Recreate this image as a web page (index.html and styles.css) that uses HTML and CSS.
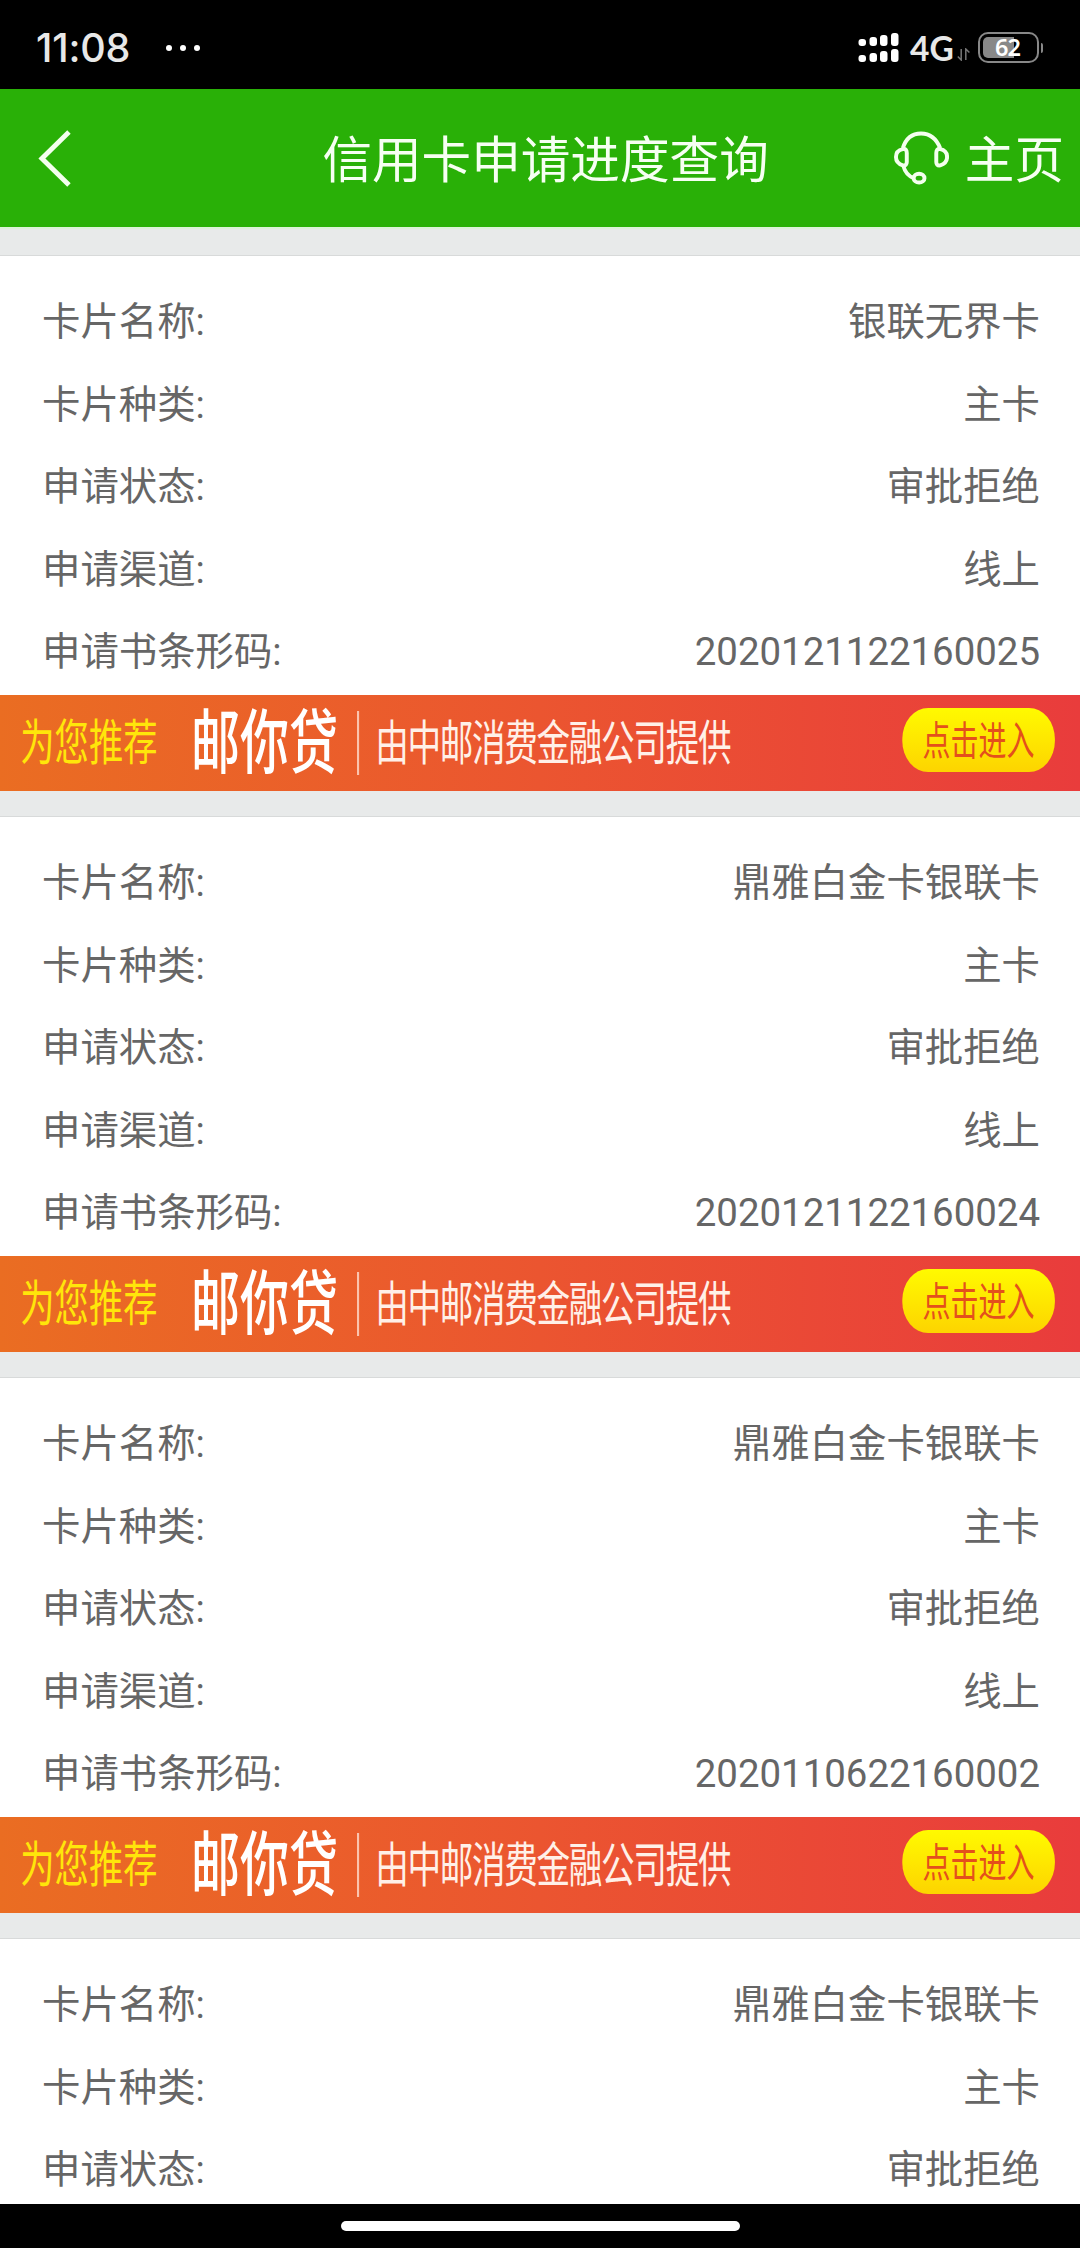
FILE: index.html
```
<!DOCTYPE html>
<html lang="zh-CN">
<head>
  <meta charset="UTF-8" />
  <meta name="viewport" content="width=device-width, initial-scale=1.0"/>
  <title>信用卡申请进度查询</title>
  <link rel="stylesheet" href="styles.css">
</head>
<body>
  <div class="app">
    <div class="status-bar">
      <span class="clock">11:08</span>
      <div class="dots"><i></i><i></i><i></i></div>
      <div class="status-right">
        <svg class="signal" width="41" height="30" viewBox="0 0 41 30" fill="#fff">
          <rect x="0.5" y="6" width="7.5" height="7" rx="3"/>
          <rect x="11.5" y="4" width="7.5" height="9" rx="3"/>
          <rect x="22" y="2" width="7.5" height="11" rx="3"/>
          <rect x="33" y="0" width="7.5" height="13" rx="3"/>
          <rect x="0.5" y="22" width="7.5" height="7" rx="3"/>
          <rect x="11.5" y="20" width="7.5" height="9" rx="3"/>
          <rect x="22" y="18" width="7.5" height="11" rx="3"/>
          <rect x="33" y="16" width="7.5" height="13" rx="3"/>
        </svg>
        <span class="network">4G</span>
        <svg class="arrows" width="13" height="13" viewBox="0 0 13 13" fill="none" stroke="#777" stroke-width="1.5">
          <path d="M4.2 1v11L0.8 8.5M8.8 12V1L12.4 4.5"/>
        </svg>
        <div class="battery">
          <div class="battery-level"></div>
          <span class="battery-text">62</span>
        </div>
        <div class="battery-tip"></div>
      </div>
    </div>

    <div class="header">
      <svg class="back" width="36" height="60" viewBox="0 0 36 60" fill="none" stroke="#f4ffee" stroke-width="5">
        <path d="M32.5 3.5L5 30.5L32.5 57.5"/>
      </svg>
      <h1>信用卡申请进度查询</h1>
      <svg class="service" width="56" height="56" viewBox="0 0 56 56" fill="none" stroke="#f4ffee" stroke-width="4">
        <path d="M9 18C12 8 19 3 27.5 3S43 8 47 18"/>
        <path d="M9 19C4 20 2 23 2 27S4 34 9 35.500C12 36 13 34 13 32V23C13 20 12 18.500 9 19Z"/>
        <path d="M47 19C52 20 54 23 54 27S52 34 47 35.500C44 36 43 34 43 32V23C43 20 44 18.500 47 19Z"/>
        <path d="M9.500 36C11 42 14 46 20 48.500"/>
        <ellipse cx="25.500" cy="48.500" rx="5.500" ry="4.500"/>
      </svg>
      <span class="home">主页</span>
    </div>

    <div class="list">
      <div class="card">
        <div class="rows">
          <div class="row"><span>卡片名称:</span><span>银联无界卡</span></div>
          <div class="row"><span>卡片种类:</span><span>主卡</span></div>
          <div class="row"><span>申请状态:</span><span>审批拒绝</span></div>
          <div class="row"><span>申请渠道:</span><span>线上</span></div>
          <div class="row"><span>申请书条形码:</span><span>2020121122160025</span></div>
        </div>
        <div class="banner">
          <div class="banner-inner">
            <span class="recommend">为您推荐</span>
            <span class="brand">邮你贷</span>
            <i class="divider"></i>
            <span class="provider">由中邮消费金融公司提供</span>
            <span class="enter">点击进入</span>
          </div>
        </div>
      </div>

      <div class="card">
        <div class="rows">
          <div class="row"><span>卡片名称:</span><span>鼎雅白金卡银联卡</span></div>
          <div class="row"><span>卡片种类:</span><span>主卡</span></div>
          <div class="row"><span>申请状态:</span><span>审批拒绝</span></div>
          <div class="row"><span>申请渠道:</span><span>线上</span></div>
          <div class="row"><span>申请书条形码:</span><span>2020121122160024</span></div>
        </div>
        <div class="banner">
          <div class="banner-inner">
            <span class="recommend">为您推荐</span>
            <span class="brand">邮你贷</span>
            <i class="divider"></i>
            <span class="provider">由中邮消费金融公司提供</span>
            <span class="enter">点击进入</span>
          </div>
        </div>
      </div>

      <div class="card">
        <div class="rows">
          <div class="row"><span>卡片名称:</span><span>鼎雅白金卡银联卡</span></div>
          <div class="row"><span>卡片种类:</span><span>主卡</span></div>
          <div class="row"><span>申请状态:</span><span>审批拒绝</span></div>
          <div class="row"><span>申请渠道:</span><span>线上</span></div>
          <div class="row"><span>申请书条形码:</span><span>2020110622160002</span></div>
        </div>
        <div class="banner">
          <div class="banner-inner">
            <span class="recommend">为您推荐</span>
            <span class="brand">邮你贷</span>
            <i class="divider"></i>
            <span class="provider">由中邮消费金融公司提供</span>
            <span class="enter">点击进入</span>
          </div>
        </div>
      </div>

      <div class="card">
        <div class="rows">
          <div class="row"><span>卡片名称:</span><span>鼎雅白金卡银联卡</span></div>
          <div class="row"><span>卡片种类:</span><span>主卡</span></div>
          <div class="row"><span>申请状态:</span><span>审批拒绝</span></div>
        </div>
      </div>
    </div>

    <div class="nav-bar"><div class="nav-pill"></div></div>
  </div>
</body>
</html>
```
FILE: styles.css
```
* {
  box-sizing: border-box;
}

body {
  margin: 0;
  font-family: Roboto, "Noto Sans CJK SC", sans-serif;
  background-color: #e8eaea;
}

.app {
  width: 1080px;
  height: 2248px;
  display: flex;
  flex-direction: column;
  overflow: hidden;
}

/* status bar */
.status-bar {
  flex: none;
  height: 89px;
  padding: 6px 37px 0 36px;
  background-color: #000;
  color: #e8e8e8;
  display: flex;
  align-items: center;
  font-family: Inter, sans-serif;
}

.clock {
  width: 130px;
  font-size: 39.5px;
  font-weight: 500;
  letter-spacing: -0.2px;
}

.dots {
  display: flex;
  gap: 8px;
}

.dots i {
  width: 6px;
  height: 6px;
  border-radius: 50%;
  background-color: #fff;
}

.status-right {
  margin-left: auto;
  display: flex;
  align-items: center;
}

.network {
  width: 47px;
  margin-left: 11px;
  font-family: Lato, sans-serif;
  font-size: 33.5px;
  font-weight: 700;
  line-height: 30px;
}

.arrows {
  margin: 14px 8px 0 0;
}

.battery {
  position: relative;
  width: 61px;
  height: 31px;
  padding: 3px;
  border: 2.5px solid #888;
  border-radius: 10px;
}

.battery-level {
  width: 31px;
  height: 21px;
  border-radius: 5px 0 0 5px;
  background-color: #888;
}

.battery-text {
  position: absolute;
  inset: 0 2px 0 0;
  text-align: center;
  font-family: "Noto Sans", sans-serif;
  font-size: 23.5px;
  font-weight: 600;
  letter-spacing: -1px;
  line-height: 26px;
  color: #fff;
}

.battery-tip {
  width: 2px;
  height: 10px;
  margin-left: 2px;
  border-radius: 0 3px 3px 0;
  background-color: #888;
}

/* title bar */
.header {
  flex: none;
  height: 140px;
  padding: 0 16px 0 37px;
  border-bottom: 2px solid #dcf3d8;
  background-color: #29b007;
  color: #f6fff2;
  display: flex;
  align-items: center;
}

.header h1 {
  width: 447px;
  margin: 5px 0 0 250px;
  font-size: 49.6px;
  font-weight: 400;
  line-height: 60px;
  white-space: nowrap;
}

.service {
  margin-left: 125px;
}

.home {
  margin: 5px 0 0 16px;
  font-size: 49.6px;
  line-height: 60px;
  white-space: nowrap;
}

/* applications */
.list {
  flex: 1;
  min-height: 0;
  padding-top: 26px;
  overflow: hidden;
}

.card {
  margin-bottom: 25px;
  border-top: 1px solid #d8dada;
  background-color: #fff;
}

.rows {
  height: 439px;
  padding: 25px 40px 0 42px;
}

.row {
  height: 82.5px;
  display: flex;
  justify-content: space-between;
  align-items: baseline;
  font-size: 38.4px;
  line-height: 82.5px;
  color: #666;
}

/* narrow lettering: the whole strip is squeezed horizontally */
.banner {
  height: 96px;
  overflow: hidden;
  background: linear-gradient(90deg, #ea6d22, #eb5530 50%, #e93c3c);
}

.banner-inner {
  width: 1543px;
  height: 96px;
  padding: 0 36px 0 29px;
  display: flex;
  align-items: center;
  transform: scaleX(0.7);
  transform-origin: left top;
  white-space: nowrap;
  color: #fff0e8;
}

.recommend {
  width: 244px;
  margin-bottom: 9px;
  font-size: 49px;
  color: #ffe60a;
}

.brand {
  width: 237px;
  margin-top: 1px;
  font-size: 70px;
  line-height: 96px;
  font-weight: 500;
  color: #fff;
}

.divider {
  width: 3px;
  height: 64px;
  background-color: #fbc3ae;
}

.provider {
  margin-left: 23px;
  margin-bottom: 8px;
  font-size: 48px;
  letter-spacing: -1.9px;
}

.enter {
  width: 218px;
  height: 64px;
  margin-left: auto;
  margin-bottom: 7px;
  border-radius: 37px / 31px;
  background: linear-gradient(#fffa00, #fdd400);
  font-size: 40px;
  line-height: 67px;
  text-align: center;
  color: #e4501c;
}

/* gesture bar */
.nav-bar {
  flex: none;
  height: 44px;
  background-color: #000;
  display: flex;
  justify-content: center;
  align-items: center;
}

.nav-pill {
  width: 399px;
  height: 10px;
  border-radius: 5px;
  background-color: #fff;
}
```
